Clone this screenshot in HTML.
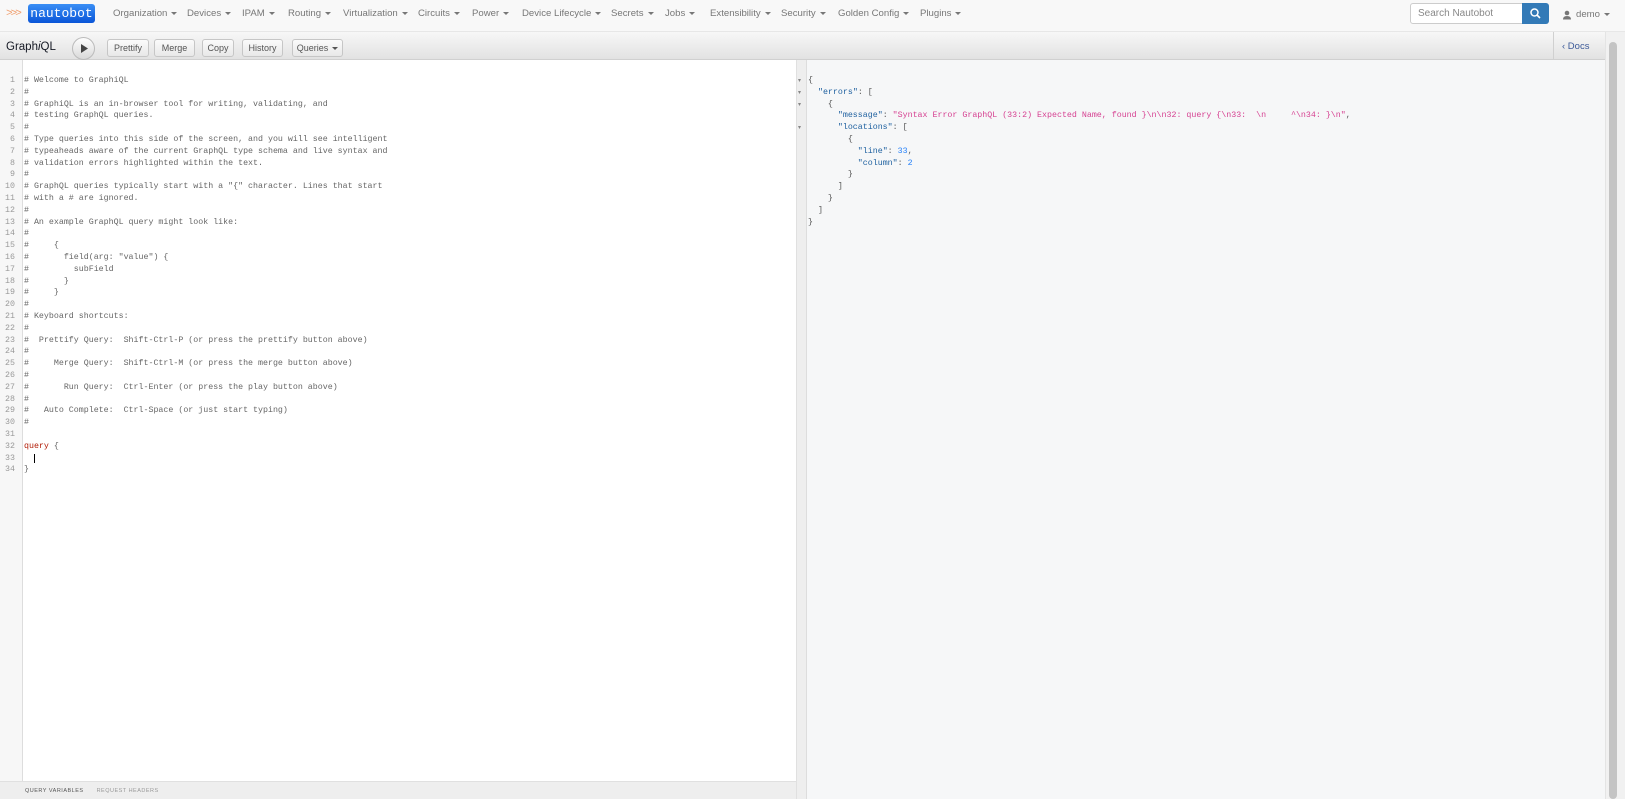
<!DOCTYPE html>
<html><head><meta charset="utf-8"><style>
*{margin:0;padding:0;box-sizing:border-box}
body{width:1625px;height:799px;overflow:hidden;background:#fff;font-family:"Liberation Sans",sans-serif;position:relative}
.nav{position:absolute;left:0;top:0;width:1625px;height:32px;background:#f8f8f8;border-bottom:1px solid #e7e7e7}
.nav .it{position:absolute;top:8px;font-size:9.6px;color:#777;white-space:nowrap}
.car{display:inline-block;width:0;height:0;border-left:3px solid transparent;border-right:3px solid transparent;border-top:3px solid #777;vertical-align:middle;margin-left:4px}
.logo{position:absolute;left:28px;top:4px;width:67px;height:19px;background:linear-gradient(#3a8ef5,#0a55d8);border-radius:3px;color:#fff;font-family:"Liberation Mono",monospace;font-size:13px;line-height:19px;text-align:center}
.arr{position:absolute;left:6px;top:8px;color:#f0a070;font-size:11px;letter-spacing:-2px;font-family:"Liberation Mono",monospace}
.search{position:absolute;left:1410px;top:3px;width:113px;height:21px;border:1px solid #ccc;border-radius:3px 0 0 3px;background:#fff;font-size:10px;color:#888;padding:4px 7px}
.sbtn{position:absolute;left:1522px;top:3px;width:27px;height:21px;background:#337ab7;border-radius:0 3px 3px 0}
.tb{position:absolute;left:0;top:32px;width:1605px;height:28px;background:linear-gradient(#f7f7f7,#e2e2e2);border-bottom:1px solid #d0d0d0}
.title{position:absolute;left:6px;top:9px;font-size:11.5px;color:#141823}
.btn{position:absolute;top:7px;height:18px;border:1px solid #c6c6c6;border-radius:3px;background:linear-gradient(#fbfbfb,#e8e8e8);font-size:9px;color:#555;text-align:center;line-height:16px}
.play{position:absolute;left:72px;top:5px;width:23px;height:23px;border-radius:50%;border:1px solid #bbb;background:linear-gradient(#fdfdfd,#d9d9d9)}
.ed{position:absolute;left:0;top:60px;width:796px;height:721px;background:#fff}
.gut{position:absolute;left:0;top:60px;width:23px;height:721px;background:#f7f7f7;border-right:1px solid #ddd}
.code{position:absolute;top:75px;font-family:"Liberation Mono",monospace;font-size:8.3px;line-height:11.8px;color:#666;white-space:pre}
.ln{left:0;width:15px;text-align:right;color:#999}
.res{position:absolute;left:796px;top:60px;width:809px;height:739px;background:#f6f7f8;border-left:1px solid #e0e0e0}
.rg{position:absolute;left:797px;top:60px;width:10px;height:739px;background:#eeeeee;border-right:1px solid #ddd}
.foot{position:absolute;left:0;top:781px;width:796px;height:18px;background:#eeeeee;border-top:1px solid #e0e0e0;font-size:5.5px;letter-spacing:.5px;color:#888;line-height:18px}
.k{color:#1f61a0}.s{color:#d64292}.n{color:#2882f9}.kw{color:#b11a04}
.sb{position:absolute;left:1605px;top:32px;width:20px;height:767px;background:#f1f1f1;border-left:1px solid #e4e4e4}
</style></head><body>
<div class="nav">
<span class="arr">&gt;&gt;&gt;</span><div class="logo">nautobot</div>
<span class="it" style="left:113px">Organization<span class="car"></span></span>
<span class="it" style="left:187px">Devices<span class="car"></span></span>
<span class="it" style="left:242px">IPAM<span class="car"></span></span>
<span class="it" style="left:288px">Routing<span class="car"></span></span>
<span class="it" style="left:343px">Virtualization<span class="car"></span></span>
<span class="it" style="left:418px">Circuits<span class="car"></span></span>
<span class="it" style="left:472px">Power<span class="car"></span></span>
<span class="it" style="left:522px">Device Lifecycle<span class="car"></span></span>
<span class="it" style="left:611px">Secrets<span class="car"></span></span>
<span class="it" style="left:665px">Jobs<span class="car"></span></span>
<span class="it" style="left:710px">Extensibility<span class="car"></span></span>
<span class="it" style="left:781px">Security<span class="car"></span></span>
<span class="it" style="left:838px">Golden Config<span class="car"></span></span>
<span class="it" style="left:920px">Plugins<span class="car"></span></span>
<div class="search">Search Nautobot</div>
<div class="sbtn"><svg width="27" height="21"><circle cx="12.5" cy="9.5" r="3.5" fill="none" stroke="#fff" stroke-width="1.5"/><line x1="15" y1="12" x2="18" y2="15" stroke="#fff" stroke-width="1.6"/></svg></div>
<svg style="position:absolute;left:1562px;top:10px" width="10" height="10"><circle cx="5" cy="3" r="2.3" fill="#777"/><path d="M1 9.5 Q1 6 5 6 Q9 6 9 9.5Z" fill="#777"/></svg>
<span class="it" style="left:1576px;top:9px">demo<span class="car"></span></span>
</div>
<div class="tb">
<div class="title">Graph<i>i</i>QL</div>
<div class="play"><svg width="21" height="21"><path d="M8 6 L15 10.5 L8 15Z" fill="#444"/></svg></div>
<div class="btn" style="left:107px;width:42px">Prettify</div>
<div class="btn" style="left:154px;width:41px">Merge</div>
<div class="btn" style="left:202px;width:32px">Copy</div>
<div class="btn" style="left:242px;width:41px">History</div>
<div class="btn" style="left:292px;width:51px">Queries<span class="car" style="border-top-color:#555"></span></div>
<div style="position:absolute;left:1553px;top:0;width:52px;height:28px;border-left:1px solid #d0d0d0;font-size:9.5px;color:#3b5998;line-height:30px;padding-left:8px">&lsaquo; Docs</div>
</div>
<div class="ed"></div><div class="gut"></div>
<div class="code ln">1
2
3
4
5
6
7
8
9
10
11
12
13
14
15
16
17
18
19
20
21
22
23
24
25
26
27
28
29
30
31
32
33
34</div>
<div class="code" style="left:24px"># Welcome to GraphiQL
#
# GraphiQL is an in-browser tool for writing, validating, and
# testing GraphQL queries.
#
# Type queries into this side of the screen, and you will see intelligent
# typeaheads aware of the current GraphQL type schema and live syntax and
# validation errors highlighted within the text.
#
# GraphQL queries typically start with a "{" character. Lines that start
# with a # are ignored.
#
# An example GraphQL query might look like:
#
#     {
#       field(arg: "value") {
#         subField
#       }
#     }
#
# Keyboard shortcuts:
#
#  Prettify Query:  Shift-Ctrl-P (or press the prettify button above)
#
#     Merge Query:  Shift-Ctrl-M (or press the merge button above)
#
#       Run Query:  Ctrl-Enter (or press the play button above)
#
#   Auto Complete:  Ctrl-Space (or just start typing)
#

<span class="kw">query</span> {
  <span style="border-left:1px solid #000"></span>
}</div>
<div class="foot"><span style="margin-left:25px;color:#555">QUERY VARIABLES</span><span style="margin-left:13px;color:#999">REQUEST HEADERS</span></div>
<div class="res"></div><div class="rg"></div>
<div class="code" style="left:798px;color:#888;font-size:6px">&#9662;
&#9662;
&#9662;

&#9662;</div>
<div class="code" style="left:808px;color:#555">{
  <span class="k">"errors"</span>: [
    {
      <span class="k">"message"</span>: <span class="s">"Syntax Error GraphQL (33:2) Expected Name, found }\n\n32: query {\n33:  \n     ^\n34: }\n"</span>,
      <span class="k">"locations"</span>: [
        {
          <span class="k">"line"</span>: <span class="n">33</span>,
          <span class="k">"column"</span>: <span class="n">2</span>
        }
      ]
    }
  ]
}</div>
<div class="sb"><div style="position:absolute;left:3px;top:10px;width:8px;height:757px;background:#c4c4c4;border-radius:4px"></div></div>
</body></html>
